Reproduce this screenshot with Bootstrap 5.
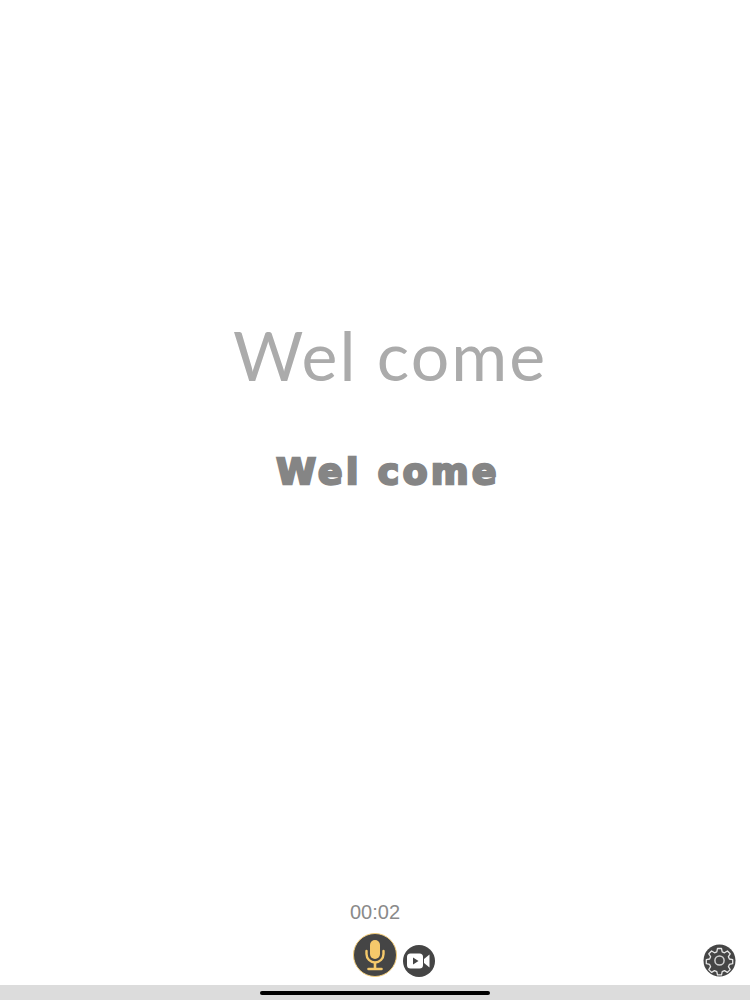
<!DOCTYPE html>
<html lang="en">
<head>
<meta charset="utf-8">
<title>Welcome</title>
<link rel="stylesheet" href="https://cdn.jsdelivr.net/npm/bootstrap@5.3.0/dist/css/bootstrap.min.css">
<style>
html,body{margin:0;height:1000px;overflow:hidden;background:#fff}
.screen{height:1000px}
.stage{flex:1 1 auto;padding-top:315px}
.hello-big{font-family:"Lato","Liberation Sans",sans-serif;font-weight:400;font-size:68px;line-height:80px;letter-spacing:2px;color:#ababab;margin:0;white-space:pre;transform:translateX(15px)}
.hello-small{font-family:"DejaVu Sans",sans-serif;font-weight:700;font-size:36px;line-height:44px;letter-spacing:3.500px;color:#858585;-webkit-text-stroke:2.500px #858585;margin:55px 0 0;white-space:pre;transform:translateX(13px)}
.timer{font-family:"Liberation Sans",sans-serif;font-size:20px;line-height:22px;color:#8a8a8a;margin-bottom:10px}
.controls{height:44px}
.mic-btn,.cam-btn,.gear-btn{border:0;padding:0;background:none;display:block;line-height:0}
.mic-wrap{position:relative;height:44px}
.mic-btn{width:44px;height:44px;border-radius:50%;background:#454545;border:1.500px solid #f3cd7a}
.cam-btn{position:absolute;left:50px;top:12px;width:32px;height:32px;border-radius:50%;background:#454545}
.gear-btn{position:absolute;right:14px;top:11px;width:33px;height:33px}
.home-strip{height:15px;background:#dcdcdc;margin-top:8px}
.home-bar{width:230px;height:4px;border-radius:2px;background:#000}
</style>
</head>
<body>
<div class="screen d-flex flex-column">
  <main class="stage text-center">
    <h1 class="hello-big">Wel come</h1>
    <h2 class="hello-small">Wel come</h2>
  </main>
  <footer class="position-relative">
    <div class="timer text-center">00:02</div>
    <div class="controls d-flex justify-content-center position-relative">
      <div class="mic-wrap">
        <button class="mic-btn d-flex align-items-center justify-content-center" type="button" aria-label="Microphone">
          <svg width="24" height="32" viewBox="0 0 24 32" fill="none">
            <rect x="7" y="1" width="10" height="19" rx="5" fill="#f5c96b"/>
            <path d="M3.500 12v3a8.500 8.500 0 0 0 17 0v-3" stroke="#f5c96b" stroke-width="2.400" stroke-linecap="round"/>
            <path d="M12 24v5M5.500 30h13" stroke="#f5c96b" stroke-width="2.600" stroke-linecap="round"/>
          </svg>
        </button>
        <button class="cam-btn d-flex align-items-center justify-content-center" type="button" aria-label="Camera">
          <svg width="24" height="16" viewBox="0 0 24 16">
            <rect x="0" y="0.500" width="16" height="15" rx="3.500" fill="#fff"/>
            <path d="M6 4.500l5.500 3.500L6 11.500z" fill="#454545"/>
            <path d="M17 6l5.500-4.500v13L17 10z" fill="#fff"/>
          </svg>
        </button>
      </div>
      <button class="gear-btn" type="button" aria-label="Settings">
        <svg width="33" height="33" viewBox="0 0 33 33" fill="none">
          <circle cx="16.500" cy="16.500" r="16" fill="#454545"/>
          <path d="M14.500 4.500h4l.7 3.300 2.300 1 2.900-1.800 2.800 2.800-1.800 2.900 1 2.300 3.300.7v4l-3.300.7-1 2.300 1.800 2.900-2.800 2.800-2.900-1.800-2.300 1-.7 3.300h-4l-.7-3.300-2.300-1-2.900 1.800-2.800-2.800 1.800-2.900-1-2.300-3.300-.7v-4l3.300-.7 1-2.300-1.800-2.900 2.800-2.800 2.900 1.800 2.300-1z" stroke="#e6e6e6" stroke-width="1.300" stroke-linejoin="round"/>
          <circle cx="16.500" cy="16.500" r="4.600" stroke="#d0d0d0" stroke-width="1.500"/>
        </svg>
      </button>
    </div>
    <div class="home-strip d-flex align-items-center justify-content-center">
      <div class="home-bar"></div>
    </div>
  </footer>
</div>
<script src="https://cdn.jsdelivr.net/npm/bootstrap@5.3.0/dist/js/bootstrap.bundle.min.js"></script>
</body>
</html>
